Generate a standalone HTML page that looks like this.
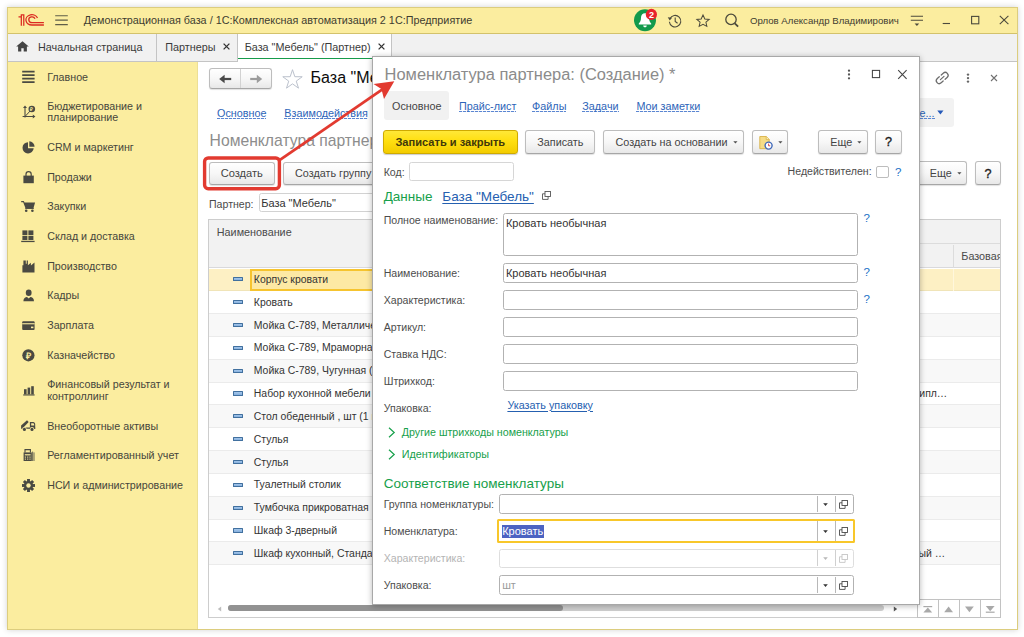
<!DOCTYPE html>
<html lang="ru">
<head>
<meta charset="utf-8">
<title>1C</title>
<style>
*{box-sizing:border-box;margin:0;padding:0}
html,body{width:1024px;height:637px;overflow:hidden;background:#fff}
body{font-family:"Liberation Sans",sans-serif;font-size:10.8px;color:#3d3d3d;position:relative}
.abs{position:absolute}
.t{position:absolute;white-space:nowrap;line-height:14px}
svg{position:absolute;overflow:visible}
.btn{border:1px solid #bdbdbd;border-bottom-color:#a6a6a6;border-radius:3px;background:linear-gradient(#ffffff 0%,#f7f7f7 50%,#e8e8e8 100%);box-shadow:0 1px 1px rgba(0,0,0,.12)}
.inp{border:1px solid #b2b2b2;border-radius:2.5px;background:#fff}
.dl{background:repeating-linear-gradient(90deg,#5b86d2 0 3px,rgba(91,134,210,.15) 3px 4px) left bottom/100% 1px no-repeat;display:inline-block;line-height:12.4px}
.ul{border-bottom:1px solid #2d64b8}
</style>
</head>
<body>
<div class="abs " style="left:7.00px;top:7.00px;width:1011.00px;height:623.00px;background:#fff;border:1px solid #dccd7e;box-shadow:0 0 6px rgba(0,0,0,.18)"></div>
<div class="abs " style="left:8.00px;top:8.00px;width:1009.00px;height:26.00px;background:#fbed9f;border-bottom:1px solid #d3c26c"></div>
<div class="abs " style="left:8.00px;top:34.00px;width:1009.00px;height:28.00px;background:#f1f1f1;border-bottom:1px solid #c4c4c4"></div>
<div class="abs " style="left:8.00px;top:62.00px;width:190.00px;height:567.00px;background:#fbed9f"></div>
<div class="abs " style="left:197.00px;top:62.00px;width:1.00px;height:567.00px;background:#ecdf96"></div>
<svg style="left:18px;top:13px" width="28" height="14" viewBox="0 0 28 14">
<path d="M0.5 3.2H2.7V1.2H6.4V12.8H2.7V4.6H0.5z" fill="#dc2a22"/>
<rect x="3.95" y="2.5" width="1.2" height="10.4" fill="#fbed9f"/>
<g fill="none" stroke="#dc2a22" stroke-linecap="butt" stroke-width="1.3">
<path d="M19.5 5.0 A6 5.15 0 1 0 14.2 12.0 H25.9"/>
<path d="M17.0 5.8 A3.2 2.9 0 1 0 14.0 9.7 H25.9"/>
</g></svg>
<svg style="left:54px;top:14px" width="14" height="12" viewBox="0 0 14 12"><g stroke="#5f5d48" stroke-width="1.1"><path d="M1.2 1.8H13.8M1.2 6.1H13.8M1.2 10.6H13.8"/></g></svg>
<div class="t " style="left:83.80px;top:12.86px;font-size:10.8px;color:#3e3c30;">Демонстрационная база / 1С:Комплексная автоматизация 2 1С:Предприятие</div>
<svg style="left:633px;top:9px" width="26" height="24" viewBox="0 0 26 24">
<circle cx="12" cy="11.3" r="11" fill="#129a4c"/>
<path d="M12 4.2c-2.6 0-4 2-4 4.6 0 3-1 4.6-2.2 5.6v1h12.4v-1c-1.2-1-2.2-2.6-2.2-5.6 0-2.6-1.4-4.6-4-4.6z" fill="#fff"/>
<path d="M10.2 16.4h3.6c0 1-0.8 1.8-1.8 1.8s-1.8-0.8-1.8-1.8z" fill="#fff"/>
<circle cx="18.4" cy="5.4" r="5.6" fill="#e8232b"/>
<text x="18.4" y="8.6" font-family="Liberation Sans" font-size="9" font-weight="bold" fill="#fff" text-anchor="middle">2</text>
</svg>
<svg style="left:667px;top:12.6px" width="16.4" height="16.4" viewBox="0 0 18 18"><g fill="none" stroke="#4c4a3c" stroke-width="1.2">
<path d="M3.2 6.2A6.3 6.3 0 1 1 2.6 9.6"/><path d="M9 5v4.2l2.6 2"/></g><path d="M0.8 4.6l2.2 3.6 2.6-3z" fill="#4c4a3c"/></svg>
<svg style="left:696px;top:13.6px" width="14" height="13.6" viewBox="0 0 16 16" preserveAspectRatio="none"><path d="M8 1.2l2.1 4.6 5 .55-3.75 3.35 1.05 4.9L8 12.1l-4.4 2.5 1.05-4.9L.9 6.35l5-.55z" fill="none" stroke="#4c4a3c" stroke-width="1.15" stroke-linejoin="miter"/></svg>
<svg style="left:723px;top:12px" width="18" height="18" viewBox="0 0 18 18"><g fill="none" stroke="#4c4a3c" stroke-width="1.3"><circle cx="8" cy="7.4" r="5.2"/><path d="M11.8 11.3l3.3 3.4" stroke-width="1.8"/></g></svg>
<div class="t " style="left:750.00px;top:13.76px;font-size:9.65px;color:#3e3c30;">Орлов Александр Владимирович</div>
<svg style="left:910px;top:14px" width="14" height="14" viewBox="0 0 14 14"><g stroke="#4c4a3c" stroke-width="1.1"><path d="M0.8 2.3H13M0.8 6.2H13"/></g><path d="M4.6 9.6h4.6l-2.3 2.4z" fill="#4c4a3c"/></svg>
<svg style="left:940px;top:12px" width="72" height="16" viewBox="0 0 72 16"><g stroke="#4c4a3c" stroke-width="1.1" fill="none">
<path d="M2.7 11.5H10"/><rect x="31.6" y="4.4" width="7.2" height="7.4"/><path d="M59.8 3.8l8.6 8.4M68.4 3.8l-8.6 8.4"/></g></svg>
<svg style="left:16px;top:41px" width="13" height="11" viewBox="0 0 13 11"><path d="M6.5 0.2L0.2 5.6h1.9v5h3.2V7.2h2.4v3.4h3.2v-5h1.9z" fill="#444"/></svg>
<div class="t " style="left:38.00px;top:39.86px;font-size:10.8px;color:#3a3a3a;">Начальная страница</div>
<div class="abs " style="left:156.00px;top:34.00px;width:1.00px;height:27.00px;background:#c4c4c4"></div>
<div class="t " style="left:165.20px;top:39.86px;font-size:10.8px;color:#3a3a3a;">Партнеры</div>
<svg style="left:223px;top:43px" width="7" height="7" viewBox="0 0 7 7"><path d="M0.6 0.6l5.8 5.8M6.4 0.6L0.6 6.4" stroke="#333" stroke-width="1.3"/></svg>
<div class="abs " style="left:236.50px;top:34.00px;width:155.50px;height:28.00px;background:#fff;border-left:1px solid #c4c4c4;border-right:1px solid #c4c4c4"></div>
<div class="abs " style="left:238.00px;top:57.60px;width:152.50px;height:1.80px;background:#179b4b"></div>
<div class="t " style="left:244.70px;top:39.86px;font-size:10.8px;color:#3a3a3a;">База "Мебель" (Партнер)</div>
<svg style="left:377.6px;top:43px" width="7" height="7" viewBox="0 0 7 7"><path d="M0.6 0.6l5.8 5.8M6.4 0.6L0.6 6.4" stroke="#333" stroke-width="1.3"/></svg>
<div class="t " style="left:47.20px;top:69.69px;font-size:10.7px;color:#46463c;">Главное</div>
<div class="t " style="left:47.20px;top:98.59px;font-size:10.7px;color:#46463c;">Бюджетирование и</div>
<div class="t " style="left:47.20px;top:110.49px;font-size:10.7px;color:#46463c;">планирование</div>
<div class="t " style="left:47.20px;top:140.09px;font-size:10.7px;color:#46463c;">CRM и маркетинг</div>
<div class="t " style="left:47.20px;top:169.69px;font-size:10.7px;color:#46463c;">Продажи</div>
<div class="t " style="left:47.20px;top:199.49px;font-size:10.7px;color:#46463c;">Закупки</div>
<div class="t " style="left:47.20px;top:229.19px;font-size:10.7px;color:#46463c;">Склад и доставка</div>
<div class="t " style="left:47.20px;top:258.79px;font-size:10.7px;color:#46463c;">Производство</div>
<div class="t " style="left:47.20px;top:288.39px;font-size:10.7px;color:#46463c;">Кадры</div>
<div class="t " style="left:47.20px;top:318.29px;font-size:10.7px;color:#46463c;">Зарплата</div>
<div class="t " style="left:47.20px;top:348.09px;font-size:10.7px;color:#46463c;">Казначейство</div>
<div class="t " style="left:47.20px;top:377.29px;font-size:10.7px;color:#46463c;">Финансовый результат и</div>
<div class="t " style="left:47.20px;top:389.19px;font-size:10.7px;color:#46463c;">контроллинг</div>
<div class="t " style="left:47.20px;top:418.59px;font-size:10.7px;color:#46463c;">Внеоборотные активы</div>
<div class="t " style="left:47.20px;top:448.19px;font-size:10.7px;color:#46463c;">Регламентированный учет</div>
<div class="t " style="left:47.20px;top:477.59px;font-size:10.7px;color:#46463c;">НСИ и администрирование</div>
<svg style="left:22px;top:70px" width="13" height="14" viewBox="0 0 13 14"><g stroke="#4a4a42" stroke-width="1.7"><path d="M0.2 1.7H12.6M0.2 5.2H12.6M0.2 8.7H12.6M0.2 12.2H12.6"/></g></svg>
<svg style="left:21.5px;top:104.5px" width="14" height="15" viewBox="0 0 14 15"><g stroke="#4a4a42" stroke-width="1.1" fill="none"><path d="M3 2v10.6M0.6 11.5H12"/><path d="M3 11.5L9 5" stroke-width="1"/></g><path d="M3 0.4l2 2.6H1z M13.4 11.5l-2.6-2v4z" fill="#4a4a42"/><circle cx="9.8" cy="4" r="3.3" fill="#4a4a42"/><text x="9.8" y="6" font-size="5" font-weight="bold" text-anchor="middle" fill="#fbed9f" font-family="Liberation Sans">₽</text></svg>
<svg style="left:22px;top:141px" width="14" height="13" viewBox="0 0 14 13"><path d="M6 1.2A5.6 5.6 0 1 0 11.7 7.2H6z" fill="#4a4a42"/><path d="M7.3 0.3A5.4 5.4 0 0 1 12.6 5.7H7.3z" fill="#4a4a42"/></svg>
<svg style="left:23px;top:170.5px" width="12" height="13" viewBox="0 0 12 13"><path d="M0.4 4.6h10.4v7.6H0.4z" fill="#4a4a42"/><path d="M3 5.6V3.2a2.6 2.6 0 0 1 5.2 0v2.4" fill="none" stroke="#4a4a42" stroke-width="1.2"/></svg>
<svg style="left:21px;top:200px" width="15" height="13" viewBox="0 0 15 13"><path d="M0.2 1h2.6l0.7 1.6h10.6l-1.6 5.4H4.4L2.2 2.2H0.2z" fill="#4a4a42"/><path d="M4.2 8.4h8.6" stroke="#4a4a42" stroke-width="1.1"/><circle cx="5.2" cy="10.8" r="1.3" fill="#4a4a42"/><circle cx="11.4" cy="10.8" r="1.3" fill="#4a4a42"/></svg>
<svg style="left:21px;top:230px" width="14" height="13" viewBox="0 0 14 13"><g fill="#4a4a42"><rect x="1.4" y="0.4" width="5" height="4.6"/><rect x="7.4" y="0.4" width="5" height="4.6"/><rect x="1.4" y="5.8" width="5" height="4.2"/><rect x="7.4" y="5.8" width="5" height="4.2"/><rect x="0.2" y="10.8" width="13.4" height="1.3"/></g></svg>
<svg style="left:22px;top:259.5px" width="13" height="13" viewBox="0 0 13 13"><path d="M0.4 12.4V5.2h1V0.6h2.4v3.2h0.9V0.6h1.2v4.6l3-2.4v2.6l3.6-2.8v9.8z" fill="#4a4a42"/></svg>
<svg style="left:23px;top:289px" width="12" height="13" viewBox="0 0 12 13"><ellipse cx="5.7" cy="3.8" rx="2.9" ry="3.3" fill="#4a4a42"/><path d="M0.4 12.2c0-3 2-4 3.6-4.2l1.7 1.4 1.7-1.4c1.6.2 3.6 1.2 3.6 4.2z" fill="#4a4a42"/></svg>
<svg style="left:22px;top:321px" width="13" height="10" viewBox="0 0 13 10"><rect x="0.2" y="0.2" width="12.4" height="8.8" rx="1" fill="#4a4a42"/><rect x="0.2" y="2.2" width="12.4" height="1.1" fill="#fbed9f"/><rect x="9" y="5.6" width="2.4" height="1.6" fill="#fbed9f"/></svg>
<svg style="left:22px;top:349px" width="13" height="13" viewBox="0 0 13 13"><circle cx="6.4" cy="6.3" r="6.1" fill="#4a4a42"/><text x="6.5" y="9.6" font-size="9" font-weight="bold" text-anchor="middle" fill="#fbed9f" font-family="Liberation Sans">₽</text></svg>
<svg style="left:22.5px;top:386px" width="12" height="10" viewBox="0 0 12 10"><g fill="#4a4a42"><rect x="1" y="3.2" width="2.6" height="5.2"/><rect x="4.6" y="1.6" width="2.6" height="6.8"/><rect x="8.2" y="0.2" width="2.6" height="8.2"/><rect x="0.2" y="8.4" width="11.4" height="1.1"/></g></svg>
<svg style="left:21px;top:420px" width="15" height="12" viewBox="0 0 15 12"><g fill="#4a4a42"><path d="M0.1 5.4L6 0.2L7.7 2L2.4 7.4H14.2V8.7H0.1z"/><path d="M8.9 2.1h3.4c1 0 1.9 1.2 1.9 2.6v4H8.9z"/></g><path d="M10.2 3.3h2.1c.5 0 .9.8.9 2.2h-3z" fill="#fbed9f"/><circle cx="3.4" cy="9.3" r="2.2" fill="#fbed9f"/><circle cx="11" cy="9.3" r="2.2" fill="#fbed9f"/><circle cx="3.4" cy="9.4" r="1.55" fill="#4a4a42"/><circle cx="11" cy="9.4" r="1.55" fill="#4a4a42"/></svg>
<svg style="left:22.5px;top:449px" width="12" height="13" viewBox="0 0 12 13"><path d="M0.6 3.4h8.2v8.6H0.6z" fill="#4a4a42"/><path d="M2 3.4V0.6h5.4v2.8" fill="none" stroke="#4a4a42" stroke-width="1.1"/><path d="M9.6 2.6v9.4M11 3.4v8.6" stroke="#4a4a42" stroke-width="0.8"/><g fill="#fbed9f"><rect x="1.8" y="5.2" width="5.8" height="1.2"/><rect x="1.8" y="7.6" width="1.2" height="1"/><rect x="4.1" y="7.6" width="1.2" height="1"/><rect x="6.4" y="7.6" width="1.2" height="1"/><rect x="1.8" y="9.6" width="1.2" height="1"/><rect x="4.1" y="9.6" width="1.2" height="1"/><rect x="6.4" y="9.6" width="1.2" height="1"/></g></svg>
<svg style="left:21.9px;top:478.5px" width="13" height="13" viewBox="0 0 13 13"><g transform="translate(6.5,6.5)" fill="#4a4a42"><rect x="-1.45" y="-6.5" width="2.9" height="3.2" transform="rotate(0)"/><rect x="-1.45" y="-6.5" width="2.9" height="3.2" transform="rotate(45)"/><rect x="-1.45" y="-6.5" width="2.9" height="3.2" transform="rotate(90)"/><rect x="-1.45" y="-6.5" width="2.9" height="3.2" transform="rotate(135)"/><rect x="-1.45" y="-6.5" width="2.9" height="3.2" transform="rotate(180)"/><rect x="-1.45" y="-6.5" width="2.9" height="3.2" transform="rotate(225)"/><rect x="-1.45" y="-6.5" width="2.9" height="3.2" transform="rotate(270)"/><rect x="-1.45" y="-6.5" width="2.9" height="3.2" transform="rotate(315)"/><circle r="4.6"/><circle r="2.2" fill="#fbed9f"/></g></svg>
<div class="abs btn" style="left:208.70px;top:68.20px;width:63.10px;height:21.10px;"></div>
<div class="abs " style="left:240.00px;top:69.20px;width:1.00px;height:19.10px;background:#d2d2d2"></div>
<svg style="left:216px;top:73px" width="50" height="12" viewBox="0 0 50 12"><g fill="#4a4a4a"><rect x="7" y="4.9" width="8.2" height="2.2"/><path d="M3.2 6L8.6 1.8v8.4z"/></g><g fill="#9c9c9c"><rect x="34.2" y="4.9" width="8.2" height="2.2"/><path d="M46.2 6L40.8 1.8v8.4z"/></g></svg>
<svg style="left:281.6px;top:68.6px" width="21" height="21" viewBox="0 0 21 21"><path d="M10.50 0.70L12.82 7.70L20.20 7.75L14.26 12.12L16.50 19.15L10.50 14.85L4.50 19.15L6.74 12.12L0.80 7.75L8.18 7.70z" fill="none" stroke="#b7bec9" stroke-width="0.95"/></svg>
<div class="t " style="left:310.60px;top:70.76px;font-size:16px;color:#0c0c0c;">База "Мебель" (Партнер)</div>
<div class="t " style="left:217.00px;top:105.66px;font-size:10.8px;color:#2d64b8;"><span class="dl">Основное</span></div>
<div class="t " style="left:284.30px;top:105.66px;font-size:10.8px;color:#2d64b8;"><span class="dl">Взаимодействия</span></div>
<div class="t " style="left:209.60px;top:133.66px;font-size:15.7px;color:#8d8d8d;">Номенклатура партнеров</div>
<div class="abs btn" style="left:208.50px;top:161.60px;width:66.50px;height:23.40px;"></div>
<div class="t " style="left:220.70px;top:165.85px;font-size:11.1px;color:#444;">Создать</div>
<div class="abs btn" style="left:283.30px;top:161.60px;width:116.70px;height:23.40px;"></div>
<div class="t " style="left:295.00px;top:165.96px;font-size:10.8px;color:#444;">Создать группу</div>
<div class="t " style="left:209.00px;top:196.53px;font-size:10.58px;color:#4a4a4a;">Партнер:</div>
<div class="abs inp" style="left:258.60px;top:193.40px;width:241.40px;height:18.60px;border-color:#d2d2d2"></div>
<div class="t " style="left:261.20px;top:196.39px;font-size:11px;color:#333;">База "Мебель"</div>
<svg style="left:934px;top:70px" width="17" height="17" viewBox="0 0 17 17"><g transform="translate(8.2,8) rotate(-42)" fill="none" stroke="#6c6c6c" stroke-width="1.25" stroke-linecap="round"><path d="M-1.3 -2.9H-4a2.9 2.9 0 0 0 0 5.8H-1.3"/><path d="M1.3 -2.9H4a2.9 2.9 0 0 1 0 5.8H1.3"/><path d="M-2.4 0H2.4"/></g></svg>
<svg style="left:965.6px;top:72.5px" width="4" height="11" viewBox="0 0 4 11"><g fill="#666"><circle cx="2" cy="1.6" r="1.2"/><circle cx="2" cy="5.1" r="1.2"/><circle cx="2" cy="8.6" r="1.2"/></g></svg>
<svg style="left:990px;top:74.2px" width="8" height="8" viewBox="0 0 8 8"><path d="M1 1l6 6M7 1L1 7" stroke="#707070" stroke-width="1.1"/></svg>
<div class="abs " style="left:880.00px;top:97.90px;width:73.80px;height:29.20px;background:#f2f2f2;border-radius:3px"></div>
<div class="t " style="left:919.50px;top:105.66px;font-size:10.8px;color:#2d64b8;"><span class="dl">е...</span></div>
<svg style="left:936.5px;top:109.6px" width="7" height="5" viewBox="0 0 7 5"><path d="M0.3 0.4h6.2L3.4 4.4z" fill="#2458b8"/></svg>
<div class="abs btn" style="left:900.00px;top:161.20px;width:66.90px;height:23.60px;"></div>
<div class="t " style="left:929.80px;top:166.26px;font-size:10.8px;color:#444;">Еще</div>
<svg style="left:956.6px;top:172.4px" width="5" height="3" viewBox="0 0 5 3"><path d="M0.3 0.2h4.2L2.4 2.5z" fill="#505050"/></svg>
<div class="abs btn" style="left:975.40px;top:161.20px;width:25.50px;height:23.60px;"></div>
<div class="t " style="left:984.40px;top:166.63px;font-size:12.6px;color:#1c1c1c;-webkit-text-stroke:0.35px #1c1c1c">?</div>
<div class="abs " style="left:208.30px;top:219.20px;width:792.70px;height:399.20px;background:#fff;border:1px solid #cdcdcd"></div>
<div class="abs " style="left:209.30px;top:220.20px;width:790.70px;height:48.30px;background:#f2f2f2;border-bottom:1px solid #d9d9dc"></div>
<div class="t " style="left:216.80px;top:224.66px;font-size:10.8px;color:#4a4a4a;">Наименование</div>
<div class="abs " style="left:700.00px;top:243.40px;width:300.00px;height:1.00px;background:#dcdcdc"></div>
<div class="abs " style="left:953.00px;top:245.00px;width:1.00px;height:23.00px;background:#dcdcdc"></div>
<div class="t " style="left:961.30px;top:248.66px;font-size:10.8px;color:#4a4a4a;width:38.6px;overflow:hidden">Базовая</div>
<div class="abs " style="left:209.30px;top:268.50px;width:790.70px;height:22.83px;background:#fdf0c4;border-bottom:1px solid #f0e4b8"></div>
<div class="abs " style="left:953.00px;top:268.50px;width:1.00px;height:22.83px;background:#fff7dc"></div>
<div class="abs " style="left:250.40px;top:269.30px;width:449.60px;height:21.43px;background:#fde9a4;border:2px solid #f6c42f"></div>
<div class="abs " style="left:233.30px;top:277.30px;width:10.10px;height:4.20px;background:linear-gradient(#a4c6ea,#86b0de);border:1px solid #41709f;border-radius:0.6px"></div>
<div class="t " style="left:253.80px;top:272.98px;font-size:10.45px;color:#333;">Корпус кровати</div>
<div class="abs " style="left:209.30px;top:291.33px;width:790.70px;height:22.83px;background:#fff;border-bottom:1px solid #ebebeb"></div>
<div class="abs " style="left:233.30px;top:300.13px;width:10.10px;height:4.20px;background:linear-gradient(#a4c6ea,#86b0de);border:1px solid #41709f;border-radius:0.6px"></div>
<div class="t " style="left:253.80px;top:295.81px;font-size:10.45px;color:#333;">Кровать</div>
<div class="abs " style="left:209.30px;top:314.16px;width:790.70px;height:22.83px;background:#f8f8f8;border-bottom:1px solid #ebebeb"></div>
<div class="abs " style="left:233.30px;top:322.96px;width:10.10px;height:4.20px;background:linear-gradient(#a4c6ea,#86b0de);border:1px solid #41709f;border-radius:0.6px"></div>
<div class="t " style="left:253.80px;top:318.64px;font-size:10.45px;color:#333;">Мойка С-789, Металлическая</div>
<div class="abs " style="left:209.30px;top:336.99px;width:790.70px;height:22.83px;background:#fff;border-bottom:1px solid #ebebeb"></div>
<div class="abs " style="left:233.30px;top:345.79px;width:10.10px;height:4.20px;background:linear-gradient(#a4c6ea,#86b0de);border:1px solid #41709f;border-radius:0.6px"></div>
<div class="t " style="left:253.80px;top:341.47px;font-size:10.45px;color:#333;">Мойка С-789, Мраморная</div>
<div class="abs " style="left:209.30px;top:359.82px;width:790.70px;height:22.83px;background:#f8f8f8;border-bottom:1px solid #ebebeb"></div>
<div class="abs " style="left:233.30px;top:368.62px;width:10.10px;height:4.20px;background:linear-gradient(#a4c6ea,#86b0de);border:1px solid #41709f;border-radius:0.6px"></div>
<div class="t " style="left:253.80px;top:364.30px;font-size:10.45px;color:#333;">Мойка С-789, Чугунная (эмаль)</div>
<div class="abs " style="left:209.30px;top:382.65px;width:790.70px;height:22.83px;background:#fff;border-bottom:1px solid #ebebeb"></div>
<div class="abs " style="left:233.30px;top:391.45px;width:10.10px;height:4.20px;background:linear-gradient(#a4c6ea,#86b0de);border:1px solid #41709f;border-radius:0.6px"></div>
<div class="t " style="left:253.80px;top:387.13px;font-size:10.45px;color:#333;">Набор кухонной мебели</div>
<div class="abs " style="left:209.30px;top:405.48px;width:790.70px;height:22.83px;background:#f8f8f8;border-bottom:1px solid #ebebeb"></div>
<div class="abs " style="left:233.30px;top:414.28px;width:10.10px;height:4.20px;background:linear-gradient(#a4c6ea,#86b0de);border:1px solid #41709f;border-radius:0.6px"></div>
<div class="t " style="left:253.80px;top:409.96px;font-size:10.45px;color:#333;">Стол обеденный , шт (1 шт)</div>
<div class="abs " style="left:209.30px;top:428.31px;width:790.70px;height:22.83px;background:#fff;border-bottom:1px solid #ebebeb"></div>
<div class="abs " style="left:233.30px;top:437.11px;width:10.10px;height:4.20px;background:linear-gradient(#a4c6ea,#86b0de);border:1px solid #41709f;border-radius:0.6px"></div>
<div class="t " style="left:253.80px;top:432.79px;font-size:10.45px;color:#333;">Стулья</div>
<div class="abs " style="left:209.30px;top:451.14px;width:790.70px;height:22.83px;background:#f8f8f8;border-bottom:1px solid #ebebeb"></div>
<div class="abs " style="left:233.30px;top:459.94px;width:10.10px;height:4.20px;background:linear-gradient(#a4c6ea,#86b0de);border:1px solid #41709f;border-radius:0.6px"></div>
<div class="t " style="left:253.80px;top:455.62px;font-size:10.45px;color:#333;">Стулья</div>
<div class="abs " style="left:209.30px;top:473.97px;width:790.70px;height:22.83px;background:#fff;border-bottom:1px solid #ebebeb"></div>
<div class="abs " style="left:233.30px;top:482.77px;width:10.10px;height:4.20px;background:linear-gradient(#a4c6ea,#86b0de);border:1px solid #41709f;border-radius:0.6px"></div>
<div class="t " style="left:253.80px;top:478.45px;font-size:10.45px;color:#333;">Туалетный столик</div>
<div class="abs " style="left:209.30px;top:496.80px;width:790.70px;height:22.83px;background:#f8f8f8;border-bottom:1px solid #ebebeb"></div>
<div class="abs " style="left:233.30px;top:505.60px;width:10.10px;height:4.20px;background:linear-gradient(#a4c6ea,#86b0de);border:1px solid #41709f;border-radius:0.6px"></div>
<div class="t " style="left:253.80px;top:501.28px;font-size:10.45px;color:#333;">Тумбочка прикроватная</div>
<div class="abs " style="left:209.30px;top:519.63px;width:790.70px;height:22.83px;background:#fff;border-bottom:1px solid #ebebeb"></div>
<div class="abs " style="left:233.30px;top:528.43px;width:10.10px;height:4.20px;background:linear-gradient(#a4c6ea,#86b0de);border:1px solid #41709f;border-radius:0.6px"></div>
<div class="t " style="left:253.80px;top:524.11px;font-size:10.45px;color:#333;">Шкаф 3-дверный</div>
<div class="abs " style="left:209.30px;top:542.46px;width:790.70px;height:22.83px;background:#f8f8f8;border-bottom:1px solid #ebebeb"></div>
<div class="abs " style="left:233.30px;top:551.26px;width:10.10px;height:4.20px;background:linear-gradient(#a4c6ea,#86b0de);border:1px solid #41709f;border-radius:0.6px"></div>
<div class="t " style="left:253.80px;top:546.94px;font-size:10.45px;color:#333;">Шкаф кухонный, Стандарт</div>
<div class="t " style="left:919.30px;top:387.13px;font-size:10.45px;color:#333;">ипл…</div>
<div class="t " style="left:918.60px;top:546.94px;font-size:10.45px;color:#333;">ый …</div>
<svg style="left:216.5px;top:605.5px" width="5" height="6" viewBox="0 0 5 6"><path d="M4.2 0.6v4.8L0.8 3z" fill="#bdbdbd"/></svg>
<div class="abs " style="left:228.40px;top:604.60px;width:656.10px;height:6.40px;background:#cfcfcf;border-radius:3.2px"></div>
<div class="abs " style="left:228.40px;top:604.60px;width:335.10px;height:6.40px;background:#929292;border-radius:3.2px"></div>
<svg style="left:892.5px;top:605.5px" width="5" height="6" viewBox="0 0 5 6"><path d="M0.8 0.6v4.8L4.2 3z" fill="#555"/></svg>
<div class="abs " style="left:917.20px;top:599.30px;width:83.80px;height:18.70px;background:#fff;border:1px solid #c2c2c2"></div>
<div class="abs " style="left:938.20px;top:599.30px;width:1.00px;height:18.70px;background:#c2c2c2"></div>
<div class="abs " style="left:959.00px;top:599.30px;width:1.00px;height:18.70px;background:#c2c2c2"></div>
<div class="abs " style="left:979.80px;top:599.30px;width:1.00px;height:18.70px;background:#c2c2c2"></div>
<svg style="left:917.2px;top:599.3px" width="84" height="19" viewBox="0 0 84 19"><g fill="#a9a9a9"><path d="M6.4 13.6h8.8L10.8 8.4z"/><rect x="6.4" y="7" width="8.8" height="1.2"/><path d="M27.2 13.2h8.8L31.6 7.6z"/><path d="M48 7.6h8.8L52.4 13.2z"/><path d="M68.8 7h8.8L73.2 12.2z"/><rect x="68.8" y="12.6" width="8.8" height="1.2"/></g></svg>
<svg style="left:0;top:0" width="300" height="200" viewBox="0 0 300 200"><rect x="204.6" y="158" width="74.8" height="30.7" rx="3.6" fill="none" stroke="#e23a30" stroke-width="3.4"/></svg>
<div class="abs " style="left:372.30px;top:56.00px;width:547.30px;height:549.40px;background:#fff;border:1px solid #a8a8a8;box-shadow:0 1px 6px rgba(0,0,0,.28)"></div>
<div class="t " style="left:384.60px;top:66.70px;font-size:16.44px;color:#8b8b8b;">Номенклатура партнера: (Создание) *</div>
<svg style="left:847px;top:68.5px" width="4" height="11" viewBox="0 0 4 11"><g fill="#555"><circle cx="2" cy="1.7" r="1.15"/><circle cx="2" cy="5.5" r="1.15"/><circle cx="2" cy="9.3" r="1.15"/></g></svg>
<svg style="left:871px;top:69px" width="10" height="10" viewBox="0 0 10 10"><rect x="1.4" y="1.4" width="7.2" height="7.2" fill="none" stroke="#444" stroke-width="1.05"/></svg>
<svg style="left:896.5px;top:68.5px" width="11" height="11" viewBox="0 0 11 11"><path d="M1.2 1.2l8.4 8.6M9.6 1.2L1.2 9.8" stroke="#444" stroke-width="1.1"/></svg>
<div class="abs " style="left:383.70px;top:91.00px;width:65.30px;height:28.70px;background:#f1f1f1;border-radius:3px"></div>
<div class="t " style="left:392.00px;top:98.96px;font-size:10.8px;color:#444;">Основное</div>
<div class="t " style="left:458.90px;top:98.96px;font-size:10.8px;color:#2d64b8;"><span class="dl">Прайс-лист</span></div>
<div class="t " style="left:532.10px;top:98.96px;font-size:10.8px;color:#2d64b8;"><span class="dl">Файлы</span></div>
<div class="t " style="left:582.30px;top:98.96px;font-size:10.8px;color:#2d64b8;"><span class="dl">Задачи</span></div>
<div class="t " style="left:636.40px;top:98.96px;font-size:10.8px;color:#2d64b8;"><span class="dl">Мои заметки</span></div>
<div class="abs " style="left:383.30px;top:130.30px;width:134.70px;height:23.50px;border:1px solid #cfaa00;border-radius:3px;background:linear-gradient(#ffe838 0%,#ffdf10 45%,#f3cc00 100%);box-shadow:0 1px 1px rgba(0,0,0,.2)"></div>
<div class="t " style="left:395.40px;top:134.76px;font-size:11.08px;color:#41380a;font-weight:bold">Записать и закрыть</div>
<div class="abs btn" style="left:525.20px;top:130.30px;width:70.30px;height:23.50px;"></div>
<div class="t " style="left:537.30px;top:134.86px;font-size:10.8px;color:#444;">Записать</div>
<div class="abs btn" style="left:603.40px;top:130.30px;width:140.40px;height:23.50px;"></div>
<div class="t " style="left:615.50px;top:134.86px;font-size:10.8px;color:#444;">Создать на основании</div>
<svg style="left:733.2px;top:141.2px" width="5" height="3" viewBox="0 0 5 3"><path d="M0.3 0.2h4.2L2.4 2.5z" fill="#505050"/></svg>
<div class="abs btn" style="left:752.10px;top:130.30px;width:36.20px;height:23.50px;"></div>
<svg style="left:758.5px;top:135.5px" width="14" height="14" viewBox="0 0 14 14"><path d="M0.8 0.5h6.6l2.8 2.8v9.4H0.8z" fill="#f6dc86" stroke="#d8b24a" stroke-width="0.9"/><path d="M7.2 0.6v3h3" fill="#fbeeb8" stroke="#d8b24a" stroke-width="0.8"/><circle cx="9.6" cy="9.6" r="3.5" fill="#fff" stroke="#3f68b8" stroke-width="1.4"/><path d="M9.6 7.6v2.2h1.6" fill="none" stroke="#d03a3a" stroke-width="0.9"/></svg>
<svg style="left:777.8px;top:141.2px" width="5" height="3" viewBox="0 0 5 3"><path d="M0.3 0.2h4.2L2.4 2.5z" fill="#505050"/></svg>
<div class="abs btn" style="left:818.40px;top:130.30px;width:49.40px;height:23.50px;"></div>
<div class="t " style="left:830.30px;top:134.86px;font-size:10.8px;color:#444;">Еще</div>
<svg style="left:857.2px;top:141.2px" width="5" height="3" viewBox="0 0 5 3"><path d="M0.3 0.2h4.2L2.4 2.5z" fill="#505050"/></svg>
<div class="abs btn" style="left:875.20px;top:130.30px;width:26.50px;height:23.50px;"></div>
<div class="t " style="left:884.90px;top:135.43px;font-size:12.6px;color:#1c1c1c;-webkit-text-stroke:0.35px #1c1c1c">?</div>
<div class="t " style="left:383.70px;top:164.63px;font-size:10.58px;color:#4c4c4c;">Код:</div>
<div class="abs inp" style="left:409.00px;top:161.80px;width:105.00px;height:18.80px;border-color:#d6d6d6"></div>
<div class="t " style="left:787.60px;top:164.43px;font-size:10.58px;color:#4c4c4c;">Недействителен:</div>
<div class="abs " style="left:876.30px;top:165.60px;width:12.80px;height:12.40px;border:1px solid #bdbdbd;border-radius:2px;background:#fff"></div>
<div class="t " style="left:895.00px;top:164.82px;font-size:11.5px;color:#1a70c6;">?</div>
<div class="t " style="left:383.70px;top:190.22px;font-size:13.5px;color:#17a04b;">Данные</div>
<div class="t " style="left:442.30px;top:190.22px;font-size:13.5px;color:#2560b0;"><span style="text-decoration:underline;text-decoration-thickness:1px;text-underline-offset:1.8px">База "Мебель"</span></div>
<svg style="left:542.2px;top:191px" width="9" height="9" viewBox="0 0 9 9"><g fill="none" stroke="#555" stroke-width="0.9"><rect x="3" y="0.5" width="5.5" height="5"/><path d="M3 2.8H0.5v5.6h5.6V5.5"/></g></svg>
<div class="t " style="left:383.70px;top:212.83px;font-size:10.58px;color:#4c4c4c;">Полное наименование:</div>
<div class="abs inp" style="left:503.20px;top:212.80px;width:354.90px;height:42.80px;"></div>
<div class="t " style="left:505.90px;top:215.59px;font-size:11px;color:#333;">Кровать необычная</div>
<div class="t " style="left:863.50px;top:211.22px;font-size:11.5px;color:#1a70c6;">?</div>
<div class="t " style="left:383.70px;top:266.03px;font-size:10.58px;color:#4c4c4c;">Наименование:</div>
<div class="abs inp" style="left:503.20px;top:263.20px;width:354.90px;height:19.50px;"></div>
<div class="t " style="left:383.70px;top:293.03px;font-size:10.58px;color:#4c4c4c;">Характеристика:</div>
<div class="abs inp" style="left:503.20px;top:290.20px;width:354.90px;height:19.50px;"></div>
<div class="t " style="left:383.70px;top:320.03px;font-size:10.58px;color:#4c4c4c;">Артикул:</div>
<div class="abs inp" style="left:503.20px;top:317.20px;width:354.90px;height:19.50px;"></div>
<div class="t " style="left:383.70px;top:347.03px;font-size:10.58px;color:#4c4c4c;">Ставка НДС:</div>
<div class="abs inp" style="left:503.20px;top:344.20px;width:354.90px;height:19.50px;"></div>
<div class="t " style="left:383.70px;top:374.03px;font-size:10.58px;color:#4c4c4c;">Штрихкод:</div>
<div class="abs inp" style="left:503.20px;top:371.20px;width:354.90px;height:19.50px;"></div>
<div class="t " style="left:505.90px;top:265.69px;font-size:11px;color:#333;">Кровать необычная</div>
<div class="t " style="left:863.50px;top:265.32px;font-size:11.5px;color:#1a70c6;">?</div>
<div class="t " style="left:863.50px;top:292.32px;font-size:11.5px;color:#1a70c6;">?</div>
<div class="t " style="left:383.70px;top:400.73px;font-size:10.58px;color:#4c4c4c;">Упаковка:</div>
<div class="t " style="left:507.40px;top:397.66px;font-size:10.8px;color:#2560b0;"><span style="text-decoration:underline;text-decoration-thickness:1px;text-underline-offset:1.6px">Указать упаковку</span></div>
<svg style="left:387.6px;top:426.8px" width="8" height="11" viewBox="0 0 8 11"><path d="M1 0.8l5.2 4.7L1 10.2" fill="none" stroke="#17a04b" stroke-width="1.2"/></svg>
<div class="t " style="left:401.80px;top:425.31px;font-size:10.66px;color:#17a04b;">Другие штрихкоды номенклатуры</div>
<svg style="left:387.6px;top:448.6px" width="8" height="11" viewBox="0 0 8 11"><path d="M1 0.8l5.2 4.7L1 10.2" fill="none" stroke="#17a04b" stroke-width="1.2"/></svg>
<div class="t " style="left:401.80px;top:447.06px;font-size:10.8px;color:#17a04b;">Идентификаторы</div>
<div class="t " style="left:383.70px;top:477.22px;font-size:13.5px;color:#17a04b;">Соответствие номенклатуры</div>
<div class="t " style="left:383.70px;top:496.83px;font-size:10.58px;color:#4c4c4c;">Группа номенклатуры:</div>
<div class="abs inp" style="left:499.00px;top:494.30px;width:354.80px;height:19.40px;border-color:#b2b2b2"></div>
<div class="abs " style="left:817.00px;top:495.80px;width:1.00px;height:16.40px;background:#b8b8b8"></div>
<div class="abs " style="left:835.00px;top:495.80px;width:1.00px;height:16.40px;background:#b8b8b8"></div>
<svg style="left:823.2px;top:502.60px" width="5" height="3" viewBox="0 0 5 3"><path d="M0.2 0.2h4.6L2.5 2.9z" fill="#333"/></svg>
<svg style="left:839.2px;top:500.3px" width="9" height="9" viewBox="0 0 9 9"><g fill="none" stroke="#4a4a4a" stroke-width="0.9"><rect x="3" y="0.5" width="5.5" height="5"/><path d="M3 2.8H0.5v5.6h5.6V5.5"/></g></svg>
<div class="t " style="left:383.70px;top:523.73px;font-size:10.58px;color:#4c4c4c;">Номенклатура:</div>
<div class="abs " style="left:497.00px;top:519.10px;width:358.20px;height:23.60px;border:2px solid #f8c72a;border-radius:1.5px;background:#fff"></div>
<div class="abs " style="left:817.00px;top:520.60px;width:1.00px;height:20.60px;background:#b8b8b8"></div>
<div class="abs " style="left:835.00px;top:520.60px;width:1.00px;height:20.60px;background:#b8b8b8"></div>
<svg style="left:823.2px;top:529.50px" width="5" height="3" viewBox="0 0 5 3"><path d="M0.2 0.2h4.6L2.5 2.9z" fill="#333"/></svg>
<svg style="left:839.2px;top:527.2px" width="9" height="9" viewBox="0 0 9 9"><g fill="none" stroke="#4a4a4a" stroke-width="0.9"><rect x="3" y="0.5" width="5.5" height="5"/><path d="M3 2.8H0.5v5.6h5.6V5.5"/></g></svg>
<div class="abs " style="left:501.60px;top:525.00px;width:42.20px;height:12.80px;background:#4c63c2"></div>
<div class="t " style="left:502.20px;top:523.79px;font-size:11px;color:#fff;">Кровать</div>
<div class="t " style="left:383.70px;top:551.03px;font-size:10.58px;color:#b4b4b4;">Характеристика:</div>
<div class="abs inp" style="left:499.00px;top:548.50px;width:354.80px;height:19.30px;border-color:#dedede"></div>
<div class="abs " style="left:817.00px;top:550.00px;width:1.00px;height:16.30px;background:#d0d0d0"></div>
<div class="abs " style="left:835.00px;top:550.00px;width:1.00px;height:16.30px;background:#d0d0d0"></div>
<svg style="left:823.2px;top:556.75px" width="5" height="3" viewBox="0 0 5 3"><path d="M0.2 0.2h4.6L2.5 2.9z" fill="#b8b8b8"/></svg>
<svg style="left:839.2px;top:554.4499999999999px" width="9" height="9" viewBox="0 0 9 9"><g fill="none" stroke="#c6c6c6" stroke-width="0.9"><rect x="3" y="0.5" width="5.5" height="5"/><path d="M3 2.8H0.5v5.6h5.6V5.5"/></g></svg>
<div class="t " style="left:383.70px;top:578.03px;font-size:10.58px;color:#4c4c4c;">Упаковка:</div>
<div class="abs inp" style="left:499.00px;top:575.30px;width:354.80px;height:19.40px;border-color:#b2b2b2"></div>
<div class="abs " style="left:817.00px;top:576.80px;width:1.00px;height:16.40px;background:#b8b8b8"></div>
<div class="abs " style="left:835.00px;top:576.80px;width:1.00px;height:16.40px;background:#b8b8b8"></div>
<svg style="left:823.2px;top:583.60px" width="5" height="3" viewBox="0 0 5 3"><path d="M0.2 0.2h4.6L2.5 2.9z" fill="#333"/></svg>
<svg style="left:839.2px;top:581.3px" width="9" height="9" viewBox="0 0 9 9"><g fill="none" stroke="#4a4a4a" stroke-width="0.9"><rect x="3" y="0.5" width="5.5" height="5"/><path d="M3 2.8H0.5v5.6h5.6V5.5"/></g></svg>
<div class="t " style="left:502.20px;top:577.96px;font-size:10.8px;color:#9a9a9a;">шт</div>
<svg style="left:0;top:0" width="1024" height="637" viewBox="0 0 1024 637"><path d="M279.6 160.2L382.4 89.4" stroke="#e23a30" stroke-width="2.8" fill="none"/><path d="M394.3 81.2L373.5 83.9L381.4 89L384 99z" fill="#e23a30"/></svg>
</body>
</html>
